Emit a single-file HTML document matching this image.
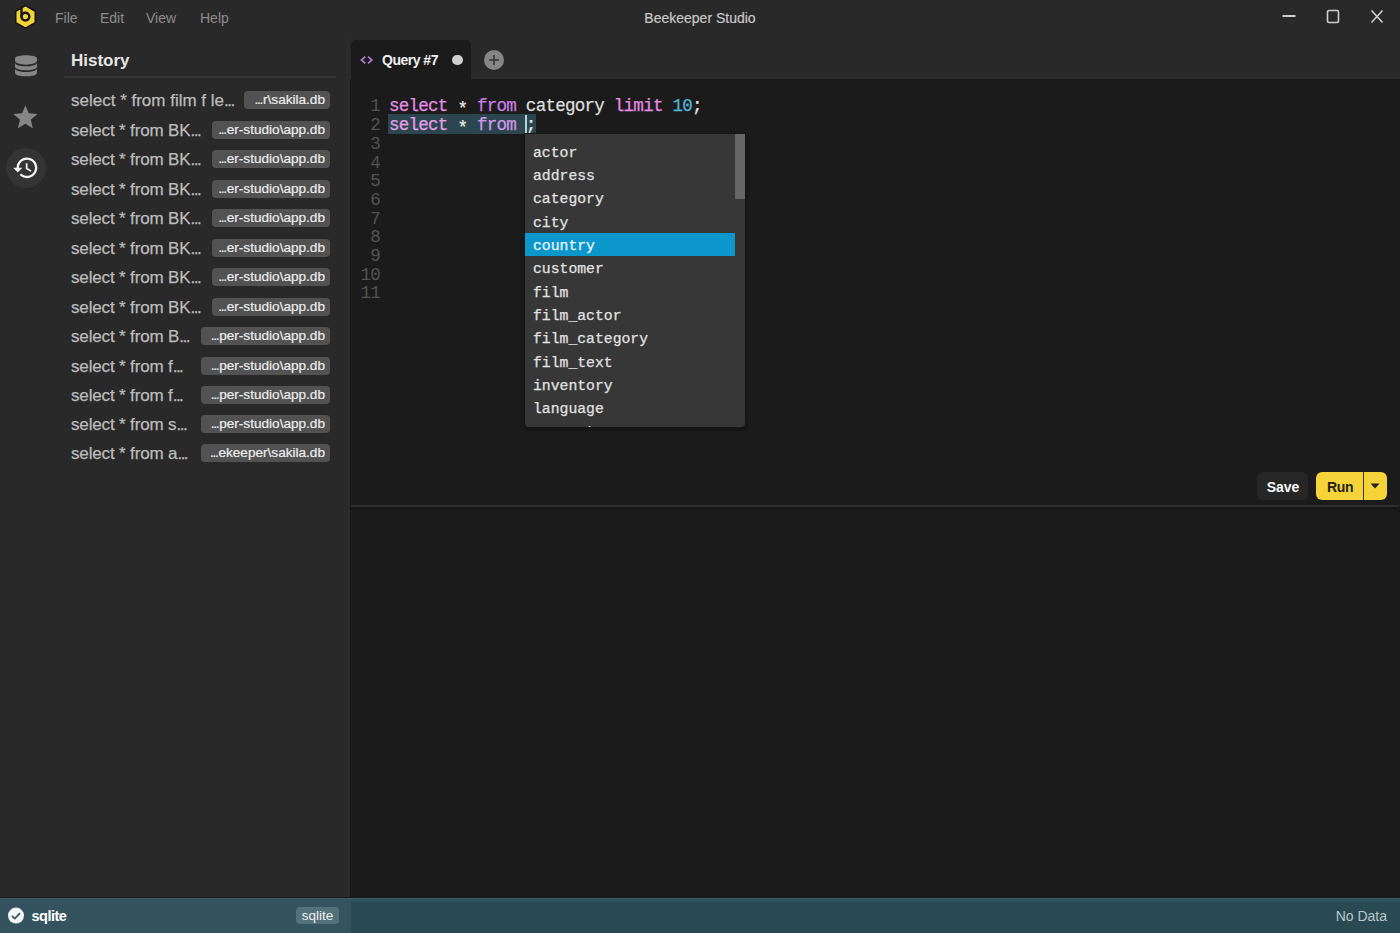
<!DOCTYPE html>
<html><head><meta charset="utf-8">
<style>
*{box-sizing:border-box;margin:0;padding:0}
html,body{width:1400px;height:933px;overflow:hidden;background:#292929;font-family:"Liberation Sans",sans-serif}
.abs{position:absolute}
#titlebar{left:0;top:0;width:1400px;height:34px;background:#292929}
.menu{top:10px;font-size:14px;color:#8c8c8c;line-height:16px}
#title{-webkit-text-stroke:0.2px currentColor;left:0;width:1400px;top:10px;text-align:center;font-size:14px;color:#c8c8c8;line-height:16px}
#iconbar{left:0;top:34px;width:50px;height:864px;background:#292929}
#sidebar{left:50px;top:34px;width:300px;height:864px;background:#292929}
#sb-edge{left:347px;top:34px;width:2px;height:864px;background:#2c2c2c}
#hist-h{left:71px;top:51px;font-size:17px;font-weight:bold;color:#e6e6e6;line-height:20px}
#hist-line{left:64px;top:76px;width:272px;height:2px;background:#363636}
.hi{left:71px;font-size:17px;color:#bcbcbc;-webkit-text-stroke:0.25px #bcbcbc;line-height:20px;white-space:nowrap;letter-spacing:-0.15px}
.dots{letter-spacing:-1.5px}
.bd{letter-spacing:-1.3px;margin-right:1px}
.badge{-webkit-text-stroke:0.2px currentColor;height:18px;border-radius:4px;background:#525252;color:#ededed;font-size:13.6px;line-height:18px;text-align:right;padding:0 5px;white-space:nowrap}
#main{left:350px;top:34px;width:1050px;height:864px;background:#1b1b1b}
#tabbar{left:350px;top:34px;width:1050px;height:45px;background:#292929;box-shadow:inset 0 -2px 0 #2c2c2c}
#tab{left:351px;top:40px;width:120px;height:39px;background:#1b1b1b;border-radius:5px 5px 0 0}
#tabicon{display:none}
#tabtitle{left:382px;top:52px;font-size:14px;letter-spacing:-0.5px;font-weight:bold;color:#f0f0f0;line-height:16px}
.code{-webkit-text-stroke:0.25px currentColor;font-family:"Liberation Mono",monospace;font-size:17.5px;letter-spacing:-0.73px;line-height:18.8px;white-space:pre;color:#dedede}
.ln{-webkit-text-stroke:0;color:#535353;width:30px;text-align:right}
.kw{color:#e38de3}
.kw2{color:#c97fe0}
.num{color:#55b5dc}
.op{color:#e6e6e6}
.ast{color:#e6e6e6;position:relative;top:3px}
#hl2{left:388px;top:113.5px;width:148px;height:20px;background:#2b464e}
.l2 .kw{color:#e59ee9}
.l2 .kw2{color:#d297e6}
#popup{left:525px;top:133.5px;width:220px;height:293px;background:#373737;border-radius:0 0 4px 4px;overflow:hidden;box-shadow:0 0 0 1px #161616,0 2px 4px rgba(0,0,0,.5)}
.pi{position:absolute;-webkit-text-stroke:0.25px currentColor;left:0;width:210px;height:23.3px;font-family:"Liberation Mono",monospace;font-size:14.75px;line-height:23.3px;color:#e2e2e2;padding-left:8px;white-space:pre}
.pi span{position:relative;top:2.6px}
.pi.sel{background:#0b96cc;color:#eaf6fb}
#save{left:1257px;top:472px;width:51px;height:28px;border-radius:6px;background:#262626;color:#fafafa;font-weight:bold;font-size:14px;line-height:30px;text-align:center;padding-left:1px}
#run{left:1316px;top:472px;width:71px;height:28px;border-radius:6px;background:#f5d43a;color:#241f10;font-size:14px;line-height:30px;padding-left:11px;font-weight:bold;letter-spacing:-0.3px}
#divider{left:350px;top:505px;width:1049px;height:2px;background:#2e2e2e;box-shadow:0 2px 2px #141414}
#vline{left:350px;top:79px;width:1px;height:819px;background:#171717}
#status{left:0;top:898px;width:1400px;height:35px;background:#294a53}
#status-l{left:0;top:898px;width:350.5px;height:35px;background:#34535e}
#status-top{left:0;top:898px;width:1400px;height:1px;background:#475a60;box-shadow:0 2px 0 #2f5a61}
#status-sh{left:0;top:897px;width:1400px;height:1px;background:#141a1e}
#st-name{left:31.5px;top:908px;font-size:14.5px;font-weight:bold;color:#fff;line-height:17px;letter-spacing:-0.5px}
#st-badge{left:296px;top:907px;width:43px;height:17px;border-radius:4px;background:#52717a;color:#f0f0f0;font-size:13.5px;line-height:17px;text-align:center}
#st-nodata{right:13px;top:908px;font-size:14px;color:#b8c6ca;line-height:17px}

</style></head><body>
<div id="titlebar" class="abs"></div>
<svg class="abs" style="left:13px;top:4px" width="25" height="26" viewBox="0 0 25 26">
<path d="M12.5 1.6 L22.3 7.2 L22.3 18.6 L12.5 24.2 L2.7 18.6 L2.7 7.2 Z" fill="#f2d43a" stroke="#151515" stroke-width="1.6" stroke-linejoin="round"/>
<circle cx="12.4" cy="12.6" r="3.9" fill="none" stroke="#151515" stroke-width="2.4"/>
<path d="M8.5 3.5 L8.5 12.6" stroke="#151515" stroke-width="2.4" stroke-linecap="round"/>
</svg>
<div class="abs menu" style="left:55px">File</div>
<div class="abs menu" style="left:100px">Edit</div>
<div class="abs menu" style="left:146px">View</div>
<div class="abs menu" style="left:200px">Help</div>
<div id="title" class="abs">Beekeeper Studio</div>
<svg class="abs" style="left:1270px;top:0" width="130" height="34" viewBox="0 0 130 34">
<path d="M12.5 16 H25.5" stroke="#d0d0d0" stroke-width="2"/>
<rect x="57.5" y="10.5" width="11" height="12" rx="1.5" fill="none" stroke="#cfcfcf" stroke-width="1.6"/>
<path d="M101.5 10.5 L112.5 22.5 M112.5 10.5 L101.5 22.5" stroke="#cfcfcf" stroke-width="1.6"/>
</svg>
<div id="iconbar" class="abs"></div>
<div id="sidebar" class="abs"></div>
<div id="sb-edge" class="abs"></div>
<svg class="abs" style="left:14px;top:54px" width="24" height="24" viewBox="0 0 24 24">
<path d="M1,4.5 C1,0.3 23,0.3 23,4.5 V6.5 C23,12 1,12 1,6.5 Z" fill="#868686"/>
<path d="M1,8.4 C1,13.6 23,13.6 23,8.4 V12.6 C23,17.6 1,17.6 1,12.6 Z" fill="#868686"/>
<path d="M1,14.2 C1,19.2 23,19.2 23,14.2 V18.4 C23,23.6 1,23.6 1,18.4 Z" fill="#868686"/>
</svg>
<svg class="abs" style="left:11.4px;top:103.2px" width="28.8" height="28.8" viewBox="0 0 24 24">
<path d="M12 17.27L18.18 21l-1.64-7.03L22 9.24l-7.19-.61L12 2 9.19 8.63 2 9.24l5.46 4.73L5.82 21z" fill="#868686"/>
</svg>
<div class="abs" style="left:6px;top:148px;width:40px;height:40px;border-radius:50%;background:#343434"></div>
<svg class="abs" style="left:12.2px;top:154.2px" width="27.6" height="27.6" viewBox="0 0 24 24">
<path d="M13 3c-4.97 0-9 4.03-9 9H1l3.89 3.89.07.14L9 12H6c0-3.87 3.13-7 7-7s7 3.13 7 7-3.13 7-7 7c-1.93 0-3.68-.79-4.94-2.06l-1.42 1.42C8.27 19.99 10.51 21 13 21c4.97 0 9-4.03 9-9s-4.03-9-9-9zm-1 5v5l4.28 2.54.72-1.21-3.5-2.08V8H12z" fill="#f4f4f4"/>
</svg>
<div id="hist-h" class="abs">History</div>
<div id="hist-line" class="abs"></div>
<div class="abs hi" style="letter-spacing:0px;top:91px">select * from film f le<span class=dots>...</span></div>
<div class="abs badge" style="left:244px;top:91px;width:86px"><span class=bd>...</span>r\sakila.db</div>
<div class="abs hi" style="top:121px">select * from BK<span class=dots>...</span></div>
<div class="abs badge" style="left:212px;top:121px;width:118px"><span class=bd>...</span>er-studio\app.db</div>
<div class="abs hi" style="top:150px">select * from BK<span class=dots>...</span></div>
<div class="abs badge" style="left:212px;top:150px;width:118px"><span class=bd>...</span>er-studio\app.db</div>
<div class="abs hi" style="top:180px">select * from BK<span class=dots>...</span></div>
<div class="abs badge" style="left:212px;top:180px;width:118px"><span class=bd>...</span>er-studio\app.db</div>
<div class="abs hi" style="top:209px">select * from BK<span class=dots>...</span></div>
<div class="abs badge" style="left:212px;top:209px;width:118px"><span class=bd>...</span>er-studio\app.db</div>
<div class="abs hi" style="top:239px">select * from BK<span class=dots>...</span></div>
<div class="abs badge" style="left:212px;top:239px;width:118px"><span class=bd>...</span>er-studio\app.db</div>
<div class="abs hi" style="top:268px">select * from BK<span class=dots>...</span></div>
<div class="abs badge" style="left:212px;top:268px;width:118px"><span class=bd>...</span>er-studio\app.db</div>
<div class="abs hi" style="top:298px">select * from BK<span class=dots>...</span></div>
<div class="abs badge" style="left:212px;top:298px;width:118px"><span class=bd>...</span>er-studio\app.db</div>
<div class="abs hi" style="top:327px">select * from B<span class=dots>...</span></div>
<div class="abs badge" style="left:201px;top:327px;width:129px"><span class=bd>...</span>per-studio\app.db</div>
<div class="abs hi" style="top:357px">select * from f<span class=dots>...</span></div>
<div class="abs badge" style="left:201px;top:357px;width:129px"><span class=bd>...</span>per-studio\app.db</div>
<div class="abs hi" style="top:386px">select * from f<span class=dots>...</span></div>
<div class="abs badge" style="left:201px;top:386px;width:129px"><span class=bd>...</span>per-studio\app.db</div>
<div class="abs hi" style="top:415px">select * from s<span class=dots>...</span></div>
<div class="abs badge" style="left:201px;top:415px;width:129px"><span class=bd>...</span>per-studio\app.db</div>
<div class="abs hi" style="top:444px">select * from a<span class=dots>...</span></div>
<div class="abs badge" style="left:201px;top:444px;width:129px"><span class=bd>...</span>ekeeper\sakila.db</div>
<div id="main" class="abs"></div>
<div id="tabbar" class="abs"></div>
<div id="tab" class="abs"></div>
<svg class="abs" style="left:358px;top:54px" width="18" height="12" viewBox="0 0 18 12"><path d="M7.3 2.6 L3.4 6 L7.3 9.4 M10 2.6 L13.9 6 L10 9.4" fill="none" stroke="#b27ccb" stroke-width="1.7"/></svg>
<div class="abs" id="tabtitle">Query #7</div>
<div class="abs" style="left:452px;top:54.7px;width:10.8px;height:10.8px;border-radius:50%;background:#d0d0d0"></div>
<div class="abs" style="left:484.2px;top:50px;width:20px;height:20px;border-radius:50%;background:#868686"></div>
<svg class="abs" style="left:484px;top:50px" width="20" height="20" viewBox="0 0 20 20"><path d="M10 5 V15 M5 10 H15" stroke="#303030" stroke-width="1.5"/></svg>
<div class="abs" id="hl2"></div>
<div class="abs code ln" style="left:350px;top:97.4px">1</div>
<div class="abs code ln" style="left:350px;top:116.1px">2</div>
<div class="abs code ln" style="left:350px;top:134.8px">3</div>
<div class="abs code ln" style="left:350px;top:153.5px">4</div>
<div class="abs code ln" style="left:350px;top:172.2px">5</div>
<div class="abs code ln" style="left:350px;top:190.9px">6</div>
<div class="abs code ln" style="left:350px;top:209.6px">7</div>
<div class="abs code ln" style="left:350px;top:228.3px">8</div>
<div class="abs code ln" style="left:350px;top:247.0px">9</div>
<div class="abs code ln" style="left:350px;top:265.7px">10</div>
<div class="abs code ln" style="left:350px;top:284.4px">11</div>
<div class="abs code" style="left:389px;top:97px"><span class="kw">select</span> <span class="ast">*</span> <span class="kw2">from</span> <span class="id">category</span> <span class="kw">limit</span> <span class="num">10</span><span class="op">;</span></div>
<div class="abs code l2" style="left:389px;top:115.7px"><span class="kw">select</span> <span class="ast">*</span> <span class="kw2">from</span> <span class="op">;</span></div>
<div class="abs" style="left:525px;top:115px;width:1.6px;height:19px;background:#b9d3dc"></div>
<div id="popup" class="abs">
<div class="pi" style="top:5.80px"><span>actor</span></div>
<div class="pi" style="top:29.10px"><span>address</span></div>
<div class="pi" style="top:52.40px"><span>category</span></div>
<div class="pi" style="top:75.70px"><span>city</span></div>
<div class="pi sel" style="top:99.00px"><span>country</span></div>
<div class="pi" style="top:122.30px"><span>customer</span></div>
<div class="pi" style="top:145.60px"><span>film</span></div>
<div class="pi" style="top:168.90px"><span>film_actor</span></div>
<div class="pi" style="top:192.20px"><span>film_category</span></div>
<div class="pi" style="top:215.50px"><span>film_text</span></div>
<div class="pi" style="top:238.80px"><span>inventory</span></div>
<div class="pi" style="top:262.10px"><span>language</span></div>
<div class="pi" style="top:285.40px"><span>payment</span></div>
<div class="abs" style="left:210px;top:0;width:10px;height:65px;background:#666"></div>
</div>
<div class="abs" id="save">Save</div>
<div class="abs" id="run"><span>Run</span></div>
<div class="abs" style="left:1363px;top:472px;width:1px;height:28px;background:#3d3515"></div>
<svg class="abs" style="left:1368px;top:480px" width="14" height="12" viewBox="0 0 14 12"><path d="M2.5 3.5 H11.5 L7 8.5 Z" fill="#222"/></svg>
<div class="abs" id="divider"></div>
<div class="abs" id="vline"></div>
<div id="status" class="abs"></div>
<div id="status-l" class="abs"></div>
<div id="status-top" class="abs"></div>
<div id="status-sh" class="abs"></div>
<svg class="abs" style="left:7px;top:907px" width="18" height="18" viewBox="0 0 18 18">
<circle cx="9" cy="8.6" r="8" fill="#f4f6f7"/>
<path d="M5 8.8 L7.8 11.6 L13 6.2" fill="none" stroke="#31545e" stroke-width="1.7"/>
</svg>
<div class="abs" id="st-name">sqlite</div>
<div class="abs" id="st-badge">sqlite</div>
<div class="abs" id="st-nodata">No Data</div>
</body></html>
